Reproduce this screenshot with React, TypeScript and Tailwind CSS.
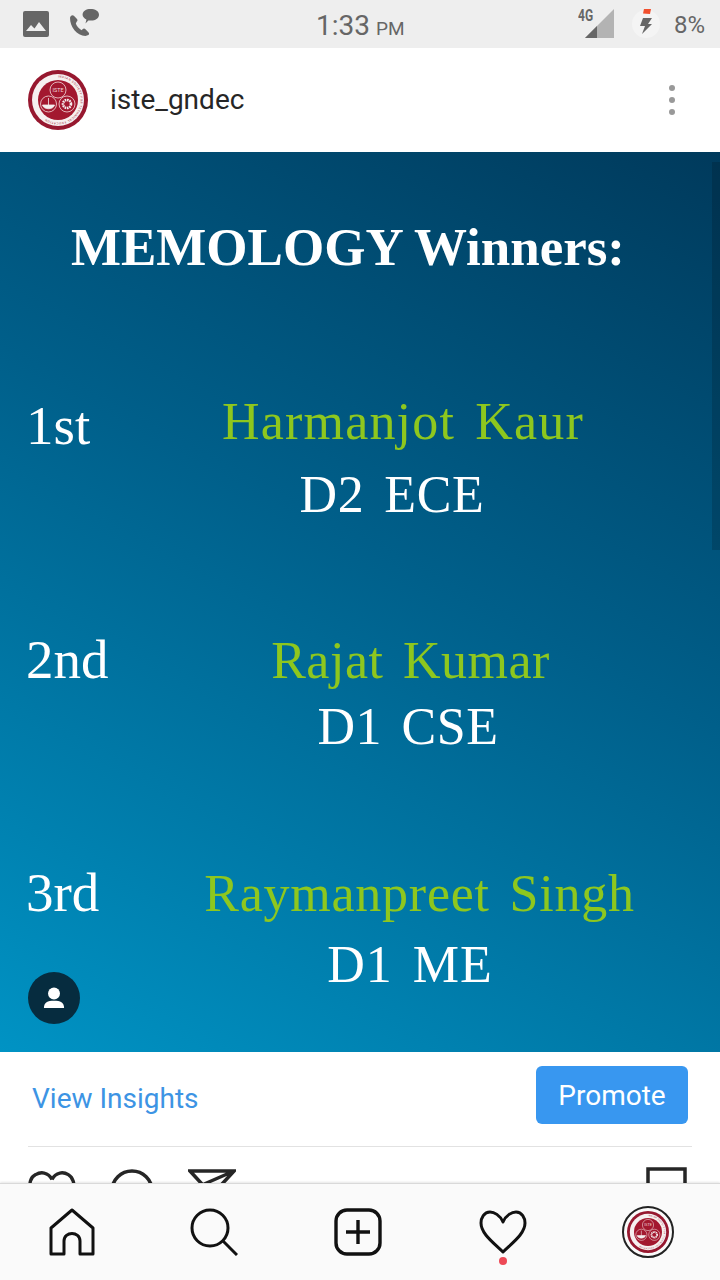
function Logo({ size, id }: { size: number; id: string }) {
  return (
    <svg width={size} height={size} viewBox="0 0 60 60">
      <circle cx="30" cy="30" r="30" fill="#97182f" />
      <circle cx="30" cy="30" r="26" fill="#f6f0f0" />
      <path id={id} d="M30 7.5a22.5 22.5 0 1 1-.01 0" fill="none" />
      <text fontSize="3" fill="#a3182f" fontFamily="Roboto, sans-serif" letterSpacing="0.55">
        <textPath href={`#${id}`}>INDIAN SOCIETY FOR TECHNICAL EDUCATION</textPath>
      </text>
      <circle cx="30" cy="30" r="20" fill="#a3182f" />
      <circle cx="30" cy="20" r="8" fill="none" stroke="#f2dcdc" strokeWidth="0.8" />
      <circle cx="20.5" cy="34" r="8" fill="none" stroke="#f2dcdc" strokeWidth="0.8" />
      <circle cx="39" cy="34" r="8" fill="none" stroke="#f2dcdc" strokeWidth="0.8" />
      <path d="M20.5 28v9M14.5 35c1 5 11 5 12 0z" fill="#f4eeee" stroke="#f4eeee" strokeWidth="0.8" />
      <circle cx="39" cy="34" r="4" fill="#a3182f" stroke="#f4eeee" strokeWidth="2.6" strokeDasharray="1.6 0.7" />
      <text x="30" y="22" textAnchor="middle" fontSize="5.4" fill="#f2dcdc" fontFamily="Roboto, sans-serif">ISTE</text>
    </svg>
  );
}

function Stat() {
  return (
    <div className="h-12 shrink-0 bg-[#eeeeee] flex items-center text-[#666666]">
      <div className="flex items-center pl-[23px] gap-[19px] w-[288px]">
        <svg width="26" height="26" viewBox="0 0 26 26">
          <rect width="26" height="26" rx="2" fill="#666666" />
          <path d="M3 20l5-6 3.5 3.5L16 11l7 9z" fill="#eeeeee" />
        </svg>
        <svg width="33" height="29" viewBox="0 0 32 30" className="-mt-[3px]">
          <path d="M1 10c0 10 7 18 16 19l3-1c1-1 1-2 0-3l-3-3c-1-1-2-1-3 0l-1 1c-3-2-5-4-6-7l1-2c1-1 1-2 0-3L5 8C4 7 2 7 1 10z" fill="#666666" />
          <path d="M22 1c5 0 9 2 9 6s-4 6-8 6c-1 0-2 0-3 0l-3 3 1-4c-2-1-4-3-4-5 0-4 4-6 8-6z" fill="#666666" />
        </svg>
      </div>
      <div className="flex items-baseline w-[120px] font-['Roboto',sans-serif] mt-[3px]">
        <span className="text-[28px] ml-[28px]">1:33</span>
        <span className="text-[19px] ml-[6px]">PM</span>
      </div>
      <div className="flex-1 relative h-12">
        <span className="absolute left-[170px] top-[6px] text-[16px] leading-[20px] font-bold font-['Roboto',sans-serif] scale-x-75 origin-left">4G</span>
        <svg width="29" height="29" viewBox="0 0 29 29" className="absolute left-[177px] top-[9px]">
          <path d="M29 0v29H0z" fill="#b3b3b3" />
          <path d="M12 17v12H0z" fill="#666666" />
        </svg>
        <div className="absolute left-[224px] top-[10px] w-7 h-7 rounded-full bg-[#f4f4f4]" />
        <svg width="16" height="26" viewBox="0 0 16 26" className="absolute left-[230px] top-[9px]">
          <path d="M6 0h7l-1 5-7-.5z" fill="#f1502e" />
          <path d="M5 9h9l-4 6h4L4 25l3-8H2z" fill="#666666" />
        </svg>
        <span className="absolute left-[266px] top-[11px] text-[24px] leading-[28px] font-['Roboto',sans-serif]">8%</span>
      </div>
    </div>
  );
}

export default function App() {
  return (
    <div className="w-[720px] h-[1280px] overflow-hidden flex flex-col bg-white font-['Roboto',sans-serif]">
      <Stat />
      <div className="h-[104px] shrink-0 flex items-center pl-7 pr-[45px] bg-white">
        <Logo size={60} id="ring-a" />
        <span className="ml-[22px] text-[28px] text-[#262626] flex-1">iste_gndec</span>
        <div className="flex flex-col gap-[6px]">
          <span className="w-[6px] h-[6px] rounded-full bg-[#999999]" />
          <span className="w-[6px] h-[6px] rounded-full bg-[#999999]" />
          <span className="w-[6px] h-[6px] rounded-full bg-[#999999]" />
        </div>
      </div>
      <div className="relative h-[900px] shrink-0 bg-[linear-gradient(208deg,#003a5c_0%,#005f8a_45%,#0093c4_100%)] font-['Liberation_Serif',serif] pt-[62px] text-[52px] leading-[60px] text-white">
        <div className="absolute right-0 top-[10px] w-2 h-[388px] bg-black/15" />
        <h1 className="text-[53px] leading-[66px] font-bold text-center ml-[-24px]">MEMOLOGY Winners:</h1>

        <div className="relative mt-[112px] text-center text-[#8ec71e] tracking-[1.2px] [word-spacing:6px] ml-[86px]">
          Harmanjot Kaur
          <span className="absolute left-[-60px] top-[4px] w-[90px] text-left text-white text-[55px] tracking-normal">1st</span>
        </div>
        <div className="mt-[13px] text-center tracking-[0.7px] [word-spacing:6px] ml-[64px]">D2 ECE</div>

        <div className="relative mt-[106px] text-center text-[#8ec71e] tracking-[0.5px] [word-spacing:6px] ml-[101px]">
          Rajat Kumar
          <span className="absolute left-[-75px] top-[-1px] w-[90px] text-left text-white text-[55px] tracking-normal">2nd</span>
        </div>
        <div className="mt-[6px] text-center tracking-[0.5px] [word-spacing:6px] ml-[96px]">D1 CSE</div>

        <div className="relative mt-[107px] text-center text-[#8ec71e] tracking-[0.75px] [word-spacing:6px] ml-[119px]">
          Raymanpreet Singh
          <span className="absolute left-[-93px] top-[-1px] w-[90px] text-left text-white text-[55px] tracking-normal">3rd</span>
        </div>
        <div className="mt-[11px] text-center tracking-[1px] [word-spacing:6px] ml-[100px]">D1 ME</div>

        <div className="absolute left-[28px] bottom-[28px] w-[52px] h-[52px] rounded-full bg-[#062c3f] flex items-center justify-center">
          <svg width="22" height="22" viewBox="0 0 24 24" fill="#ffffff">
            <circle cx="12" cy="7" r="6.5" />
            <path d="M1 23c0-6 4-8 11-8s11 2 11 8z" />
          </svg>
        </div>
      </div>
      <div className="relative flex-1 bg-white">
        <div className="flex items-center justify-between pl-8 pr-8 h-[94px]">
          <span className="text-[28px] text-[#3d94e4]">View Insights</span>
          <span className="w-[152px] h-[58px] rounded-[6px] bg-[#3897f0] text-white text-[28px] flex items-center justify-center -mt-[9px] pt-[3px]">Promote</span>
        </div>
        <div className="mx-7 h-px bg-[#e2e2e2]" />
        <div className="flex items-start pl-7 pr-8 pt-[22px]">
          <svg width="48" height="40" viewBox="0 0 50 40" fill="none" stroke="#262626" strokeWidth="3.5">
            <path d="M25 10C21 2 13 2 8 5 2 8 1 15 3 21" />
            <path d="M25 10c4-8 12-8 17-5 5 3 7 10 5 16" />
          </svg>
          <svg width="44" height="40" viewBox="0 0 44 40" fill="none" stroke="#262626" strokeWidth="3.5" className="ml-[34px]">
            <circle cx="22" cy="22" r="20" />
          </svg>
          <svg width="48" height="40" viewBox="0 0 48 40" fill="none" stroke="#262626" strokeWidth="3.5" className="ml-[34px]">
            <path d="M2 2h44L24 26zM46 2L14 16" />
          </svg>
          <svg width="42" height="40" viewBox="0 0 42 40" fill="none" stroke="#262626" strokeWidth="3.5" className="ml-auto -mt-[2px]">
            <path d="M2 40V2h37v38" />
          </svg>
        </div>
        <div className="absolute left-0 right-0 bottom-0 h-[97px] bg-[#fafafa] border-t border-[#d9d9d9] shadow-[0_-1px_2px_rgba(0,0,0,0.1)] flex items-center justify-between pl-[49px] pr-[46px]">
          <svg width="46" height="48" viewBox="0 0 46 48" fill="none" stroke="#111111" strokeWidth="3">
            <path d="M2 46V20L23 2l21 18v26H31V33c0-10-16-10-16 0v13z" strokeLinejoin="round" />
          </svg>
          <svg width="48" height="48" viewBox="0 0 48 48" fill="none" stroke="#111111" strokeWidth="3">
            <circle cx="20" cy="20" r="18" />
            <path d="M33 33l14 14" />
          </svg>
          <svg width="48" height="48" viewBox="0 0 48 48" fill="none" stroke="#111111" strokeWidth="3.4">
            <rect x="2" y="2" width="44" height="44" rx="11" />
            <path d="M24 12v24M12 24h24" />
          </svg>
          <div className="relative ml-[2px]">
            <svg width="48" height="44" viewBox="0 0 48 44" fill="none" stroke="#111111" strokeWidth="3">
              <path d="M24 12C21 5 15 2 11 2 5 2 2 8 2 13c0 11 13 20 22 29 9-9 22-18 22-29 0-5-3-11-9-11-4 0-10 3-13 10z" strokeLinejoin="round" />
            </svg>
            <span className="absolute left-[20px] top-[47px] w-2 h-2 rounded-full bg-[#ed4956]" />
          </div>
          <div className="w-[52px] h-[52px] rounded-full border-2 border-[#222222] flex items-center justify-center">
            <Logo size={42} id="ring-b" />
          </div>
        </div>
      </div>
    </div>
  );
}
